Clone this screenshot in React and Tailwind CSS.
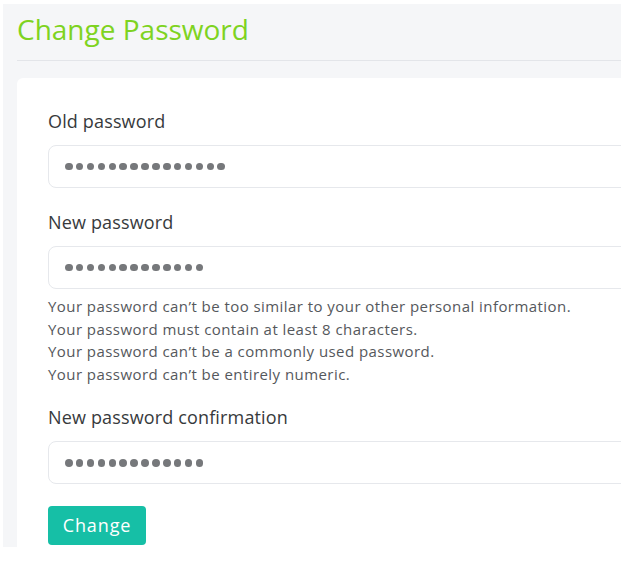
import React from "react";

const font = { fontFamily: '"Open Sans", "Liberation Sans", sans-serif' };

const Dots = ({ count }) => (
  <div className="flex items-center gap-[3.4px]">
    {Array.from({ length: count }).map((_, i) => (
      <span key={i} className="block w-[7.5px] h-[7.5px] rounded-full bg-[#76787b]" />
    ))}
  </div>
);

const Field = ({ label, dots, children }) => (
  <div>
    <label className="block text-[18px] leading-[24px] tracking-[0.15px] text-[#373a3c]">{label}</label>
    <div className="mt-[12px] h-[43px] w-[620px] rounded-[8px] border border-[#e6e8ec] bg-white pl-[16px] flex items-center">
      <Dots count={dots} />
    </div>
    {children}
  </div>
);

export default function App() {
  return (
    <div className="min-h-screen bg-white pt-[4px] pl-[3px]" style={font}>
      <div className="w-[618px] h-[543px] overflow-hidden bg-[#f5f6f8] pl-[14px]">
        <h1 className="pt-[5px] text-[28px] leading-[40px] text-[#7ed321]">Change Password</h1>
        <div className="mt-[11px] h-px w-[620px] bg-[#e3e5e9]" />
        <div className="mt-[17px] w-[640px] min-h-[480px] rounded-tl-[6px] bg-white pl-[31px] pt-[31px]">
          <Field label="Old password" dots={15} />
          <div className="mt-[22px]">
            <Field label="New password" dots={13}>
              <ul className="mt-[6px] text-[15px] leading-[22.6px] tracking-[0.44px] text-[#55585c]">
                <li>Your password can’t be too similar to your other personal information.</li>
                <li>Your password must contain at least 8 characters.</li>
                <li>Your password can’t be a commonly used password.</li>
                <li>Your password can’t be entirely numeric.</li>
              </ul>
            </Field>
          </div>
          <div className="mt-[20px]">
            <Field label="New password confirmation" dots={13} />
          </div>
          <button className="mt-[22px] h-[39px] w-[98px] rounded-[4px] bg-[#16bfa6] text-[18px] tracking-[0.9px] text-white">
            Change
          </button>
        </div>
      </div>
    </div>
  );
}
